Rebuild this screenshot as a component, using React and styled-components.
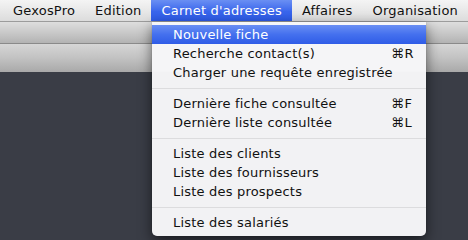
import React from "react";
import styled, { createGlobalStyle } from "styled-components";

const GlobalStyle = createGlobalStyle`
  html, body { margin: 0; padding: 0; }
  body {
    background: #3a3d46;
    font-family: "DejaVu Sans", "Liberation Sans", sans-serif;
    font-size: 13px;
    -webkit-font-smoothing: antialiased;
  }
`;

const Screen = styled.div`
  position: relative;
  width: 468px;
  height: 240px;
  display: flex;
  flex-direction: column;
  overflow: hidden;
  background: #3a3d46;
`;

const MenuBar = styled.div`
  height: 21px;
  display: flex;
  align-items: stretch;
  padding-left: 3px;
  background: linear-gradient(#f4f4f4, #e6e6e6 60%, #dcdcdc);
  border-bottom: 1px solid #9c9c9c;
`;

const MenuTitle = styled.div`
  display: flex;
  align-items: center;
  padding: 0 10px 1px 10px;
  color: ${(p) => (p.$active ? "#fff" : "#111")};
  background: ${(p) =>
    p.$active ? "linear-gradient(#6a8ff3, #3a66ec 55%, #2d5ae6)" : "transparent"};
  font-size: 13px;
  letter-spacing: 0.2px;
  white-space: nowrap;
`;

const Band = styled.div`
  height: ${(p) => p.$h}px;
  background: ${(p) => p.$bg};
  border-bottom: ${(p) => (p.$line ? "1px solid #8a8a8a" : "none")};
`;

const Desk = styled.div`
  flex: 1;
  background: #3a3d46;
`;

const Dropdown = styled.div`
  position: absolute;
  top: 22px;
  left: 152px;
  width: 274px;
  padding: 3px 0 4px;
  background: rgba(246, 246, 248, 0.98);
  border-radius: 0 0 5px 5px;
  box-shadow: 0 5px 14px rgba(0, 0, 0, 0.55), 0 0 1px rgba(0, 0, 0, 0.4);
  display: flex;
  flex-direction: column;
`;

const Item = styled.div`
  height: 19px;
  display: grid;
  grid-template-columns: 1fr 35px;
  align-items: center;
  padding-left: 21px;
  color: ${(p) => (p.$hl ? "#fff" : "#111")};
  background: ${(p) =>
    p.$hl ? "linear-gradient(#6a8ff3, #4470ee 50%, #2f5ce7)" : "transparent"};
  font-size: 13px;
  letter-spacing: 0.2px;
  white-space: nowrap;
`;

const Shortcut = styled.span`
  font-size: 13px;
  letter-spacing: 0.5px;
`;

const Separator = styled.div`
  height: 12px;
  display: flex;
  align-items: center;
  &::after {
    content: "";
    flex: 1;
    height: 1px;
    background: #dcdcde;
  }
`;

const titles = ["GexosPro", "Edition", "Carnet d'adresses", "Affaires", "Organisation"];

const groups = [
  [
    { label: "Nouvelle fiche", hl: true },
    { label: "Recherche contact(s)", key: "⌘R" },
    { label: "Charger une requête enregistrée" },
  ],
  [
    { label: "Dernière fiche consultée", key: "⌘F" },
    { label: "Dernière liste consultée", key: "⌘L" },
  ],
  [
    { label: "Liste des clients" },
    { label: "Liste des fournisseurs" },
    { label: "Liste des prospects" },
  ],
  [{ label: "Liste des salariés" }],
];

export default function App() {
  return (
    <>
      <GlobalStyle />
      <Screen>
        <MenuBar>
          {titles.map((t, i) => (
            <MenuTitle key={t} $active={i === 2}>
              {t}
            </MenuTitle>
          ))}
        </MenuBar>
        <Band $h={21} $line $bg="linear-gradient(#dedede, #c9c9c9 50%, #b3b3b3)" />
        <Band $h={28} $bg="linear-gradient(#d6d6d6, #c2c2c2 50%, #a9a9a9)" />
        <Desk />
        <Dropdown>
          {groups.map((g, gi) => (
            <React.Fragment key={gi}>
              {gi > 0 && <Separator />}
              {g.map((it) => (
                <Item key={it.label} $hl={it.hl}>
                  <span>{it.label}</span>
                  <Shortcut>{it.key || ""}</Shortcut>
                </Item>
              ))}
            </React.Fragment>
          ))}
        </Dropdown>
      </Screen>
    </>
  );
}
